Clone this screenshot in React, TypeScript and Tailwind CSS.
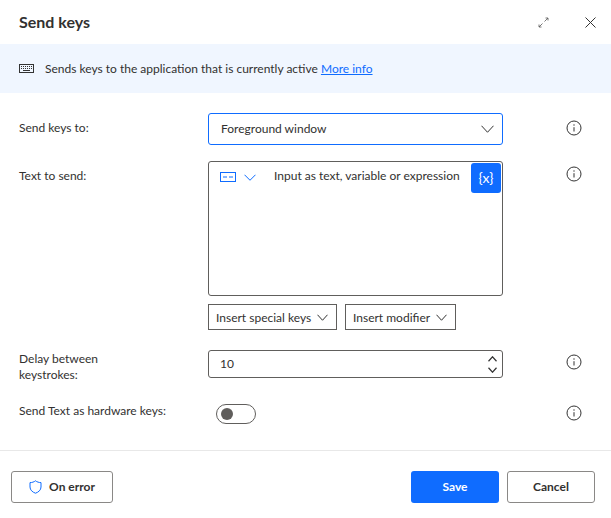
function InfoIcon() {
  return (
    <svg width="16" height="16" viewBox="0 0 16 16" fill="none" stroke="#333" className="block">
      <circle cx="8" cy="8" r="7" strokeWidth="1" />
      <path d="M8 7.2V11.5" strokeWidth="1" />
      <circle cx="8" cy="5" r="0.7" fill="#333" stroke="none" />
    </svg>
  );
}

function Chevron({ w, up, color = "#333", sw = 1 }: { w: number; up?: boolean; color?: string; sw?: number }) {
  const h = Math.ceil(w / 2) + 1;
  const top = 0.75;
  const bottom = h - 0.75;
  return (
    <svg width={w} height={h} viewBox={`0 0 ${w} ${h}`} fill="none" stroke={color} strokeWidth={sw} className="block shrink-0">
      <path d={up ? `M0.5 ${bottom}L${w / 2} ${top}L${w - 0.5} ${bottom}` : `M0.5 ${top}L${w / 2} ${bottom}L${w - 0.5} ${top}`} />
    </svg>
  );
}

function KeyboardIcon() {
  return (
    <svg width="15" height="10" viewBox="0 0 15 10" fill="none" className="block">
      <rect x="0.5" y="0.5" width="14" height="8" stroke="#333" />
      <path d="M2 2.5h11M2 4.5h11" stroke="#333" strokeDasharray="1 1" />
      <path d="M4 6.5h7" stroke="#333" />
    </svg>
  );
}

function ExpandIcon() {
  return (
    <svg width="11" height="11" viewBox="0 0 11 11" fill="none" stroke="#555" strokeWidth="0.8" className="block">
      <path d="M6.5 4.5L10 1M7.5 1H10V3.5" />
      <path d="M4.5 6.5L1 10M1 7.5V10H3.5" />
    </svg>
  );
}

function CloseIcon() {
  return (
    <svg width="11" height="11" viewBox="0 0 11 11" fill="none" stroke="#333" strokeWidth="1" className="block">
      <path d="M0.5 0.5L10.5 10.5M10.5 0.5L0.5 10.5" />
    </svg>
  );
}

function ShieldIcon() {
  return (
    <svg width="13" height="14" viewBox="0 0 13 14" fill="none" stroke="#0f6cff" strokeWidth="1" className="block">
      <path d="M6.5 0.8C8 2 10 2.6 12 2.6V7C12 10 9.5 12.2 6.5 13.2C3.5 12.2 1 10 1 7V2.6C3 2.6 5 2 6.5 0.8Z" />
    </svg>
  );
}

function TextModeIcon() {
  return (
    <svg width="16" height="10" viewBox="0 0 16 10" fill="none" stroke="#0f6cff" className="block">
      <rect x="0.5" y="0.5" width="15" height="9" />
      <path d="M3 5h4M9 5h4" />
    </svg>
  );
}

export default function App() {
  return (
    <div className="w-[611px] h-[518px] bg-white text-[#323130] text-[12px] font-['Lato',sans-serif] overflow-hidden flex flex-col">
      {/* Header */}
      <div className="h-[44px] flex items-center pl-[19px] pr-[15px]">
        <h1 className="text-[16px] font-bold flex-1">Send keys</h1>
        <ExpandIcon />
        <button className="ml-[36px]">
          <CloseIcon />
        </button>
      </div>

      {/* Banner */}
      <div className="h-[49px] bg-[#f0f6ff] flex items-center pl-[19px]">
        <KeyboardIcon />
        <span className="ml-[11px]">
          Sends keys to the application that is currently active{" "}
          <a className="text-[#0f6cff] underline">More info</a>
        </span>
      </div>

      {/* Form */}
      <div className="flex-1 grid grid-cols-[208px_295px_1fr] content-start pt-[20px]">
        <label className="pl-[19px] pt-[7px] leading-[16px]">Send keys to:</label>
        <div className="h-[32px] rounded-[3px] border border-[#0f6cff] flex items-center pl-[12px] pr-[8px]">
          <span className="flex-1">Foreground window</span>
          <Chevron w={13} />
        </div>
        <div className="pl-[63px] pt-[7px]"><InfoIcon /></div>

        <label className="pl-[19px] pt-[23px] leading-[16px]">Text to send:</label>
        <div className="mt-[16px] h-[135px] rounded-[3px] border border-[#605e5c] flex items-start pt-[1px] pr-[1px]">
          <div className="flex items-center pl-[11px] pt-[9px] shrink-0">
            <TextModeIcon />
            <div className="ml-[8px]"><Chevron w={12} color="#0f6cff" /></div>
          </div>
          <span className="ml-[18px] pt-[5px] flex-1 min-w-0 leading-[16px] whitespace-nowrap">Input as text, variable or expression</span>
          <div className="w-[30px] h-[30px] pb-[2px] shrink-0 rounded-[3px] bg-[#0f6cff] text-white flex items-center justify-center text-[14px]">{"{x}"}</div>
        </div>
        <div className="pl-[63px] pt-[21px]"><InfoIcon /></div>

        <div />
        <div className="mt-[8px] flex gap-[8px]">
          <button className="w-[129px] h-[26px] pl-[7px] pr-[8px] pt-[1px] border border-[#605e5c] flex items-center justify-between">
            Insert special keys <Chevron w={11} />
          </button>
          <button className="w-[111px] h-[26px] pl-[7px] pr-[8px] pt-[1px] border border-[#605e5c] flex items-center justify-between">
            Insert modifier <Chevron w={11} />
          </button>
        </div>
        <div />

        <label className="pl-[19px] pt-[21px] leading-[16px]">Delay between<br />keystrokes:</label>
        <div className="mt-[20px] h-[28px] rounded-[3px] border border-[#605e5c] flex items-center pl-[11px] pr-[5px]">
          <span className="flex-1">10</span>
          <div className="flex flex-col gap-[5px]">
            <Chevron w={9} up sw={1.2} />
            <Chevron w={9} sw={1.2} />
          </div>
        </div>
        <div className="pl-[63px] pt-[24px]"><InfoIcon /></div>

        <label className="pl-[19px] pt-[20px] leading-[16px] whitespace-nowrap">Send Text as hardware keys:</label>
        <div className="mt-[21px] pl-[8px]">
          <div className="w-[40px] h-[20px] rounded-full border border-[#605e5c] flex items-center pl-[4px]">
            <div className="w-[12px] h-[12px] rounded-full bg-[#605e5c]" />
          </div>
        </div>
        <div className="pl-[63px] pt-[22px]"><InfoIcon /></div>
      </div>

      {/* Footer */}
      <div className="h-[68px] border-t border-[#e8e8e8] flex items-start pt-[20px] pl-[11px] pr-[16px] mt-auto">
        <button className="w-[102px] h-[32px] rounded-[3px] border border-[#8a8886] flex items-center justify-center gap-[7px] font-bold">
          <ShieldIcon />
          On error
        </button>
        <div className="flex-1" />
        <button className="w-[88px] h-[32px] rounded-[3px] bg-[#0f6cff] text-white font-bold">Save</button>
        <button className="ml-[8px] w-[88px] h-[32px] rounded-[3px] border border-[#8a8886] font-bold">Cancel</button>
      </div>
    </div>
  );
}
